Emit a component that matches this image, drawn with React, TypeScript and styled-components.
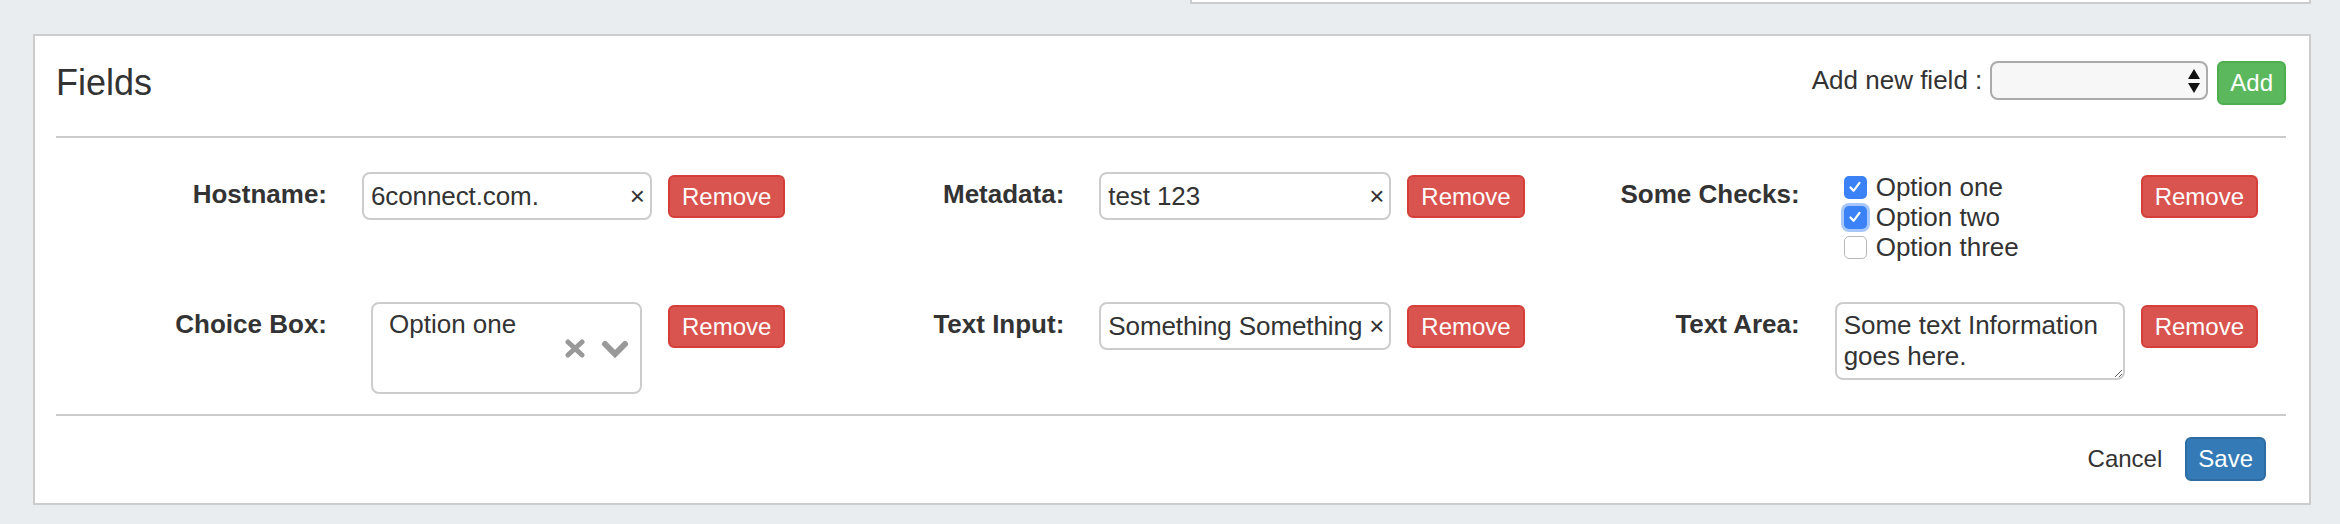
import styled, { createGlobalStyle } from "styled-components";

const GlobalStyle = createGlobalStyle`
  body {
    margin: 0;
    background-color: #e9edf0;
    font-family: "Liberation Sans", Arial, Helvetica, sans-serif;
    color: #333;
  }
`;

type FieldDef = {
  label: string;
  kind: "text" | "choice" | "checks" | "area";
  value?: string;
};

const fields: FieldDef[] = [
  { label: "Hostname:", kind: "text", value: "6connect.com." },
  { label: "Metadata:", kind: "text", value: "test 123" },
  { label: "Some Checks:", kind: "checks" },
  { label: "Choice Box:", kind: "choice", value: "Option one" },
  { label: "Text Input:", kind: "text", value: "Something Something" },
  { label: "Text Area:", kind: "area", value: "Some text Information goes here." },
];

const checks = [
  { label: "Option one", checked: true, focused: false },
  { label: "Option two", checked: true, focused: true },
  { label: "Option three", checked: false, focused: false },
];

const labelWidths = [271, 265, 257];
const controlWidths = [290, 292, 290];

function ClearIcon() {
  return (
    <svg width="22" height="19" viewBox="0 0 22 19">
      <path d="M4 3 L18 16 M18 3 L4 16" stroke="#999" strokeWidth="5" strokeLinecap="round" />
    </svg>
  );
}

function ChevronIcon() {
  return (
    <svg width="28" height="19" viewBox="0 0 28 19">
      <path d="M4 5 L14 15 L24 5" stroke="#999" strokeWidth="6" fill="none" strokeLinecap="round" />
    </svg>
  );
}

function SelectArrows() {
  return (
    <svg width="12" height="24" viewBox="0 0 12 24">
      <polygon points="6,0 12,10 0,10" fill="#111" />
      <polygon points="0,14 12,14 6,24" fill="#111" />
    </svg>
  );
}

function CheckMark() {
  return (
    <svg width="14" height="14" viewBox="0 0 14 14">
      <path d="M2.5 7.5 L5.6 10.8 L11.5 2.8" stroke="#fff" strokeWidth="2.2" fill="none" strokeLinecap="round" strokeLinejoin="round" />
    </svg>
  );
}

function renderControl(field: FieldDef) {
  if (field.kind === "text") {
    return (
      <TextBox>
        <TextValue>{field.value}</TextValue>
        <ClearMark>×</ClearMark>
      </TextBox>
    );
  }
  if (field.kind === "choice") {
    return (
      <ChoiceBox>
        <ChoiceValue>{field.value}</ChoiceValue>
        <ChoiceIcons>
          <ClearIcon />
          <ChevronIcon />
        </ChoiceIcons>
      </ChoiceBox>
    );
  }
  if (field.kind === "area") {
    return <TextArea defaultValue={field.value} readOnly />;
  }
  return (
    <Checks>
      {checks.map((item) => (
        <CheckRow key={item.label}>
          <CheckBox $checked={item.checked} $focused={item.focused}>
            {item.checked && <CheckMark />}
          </CheckBox>
          {item.label}
        </CheckRow>
      ))}
    </Checks>
  );
}

function App() {
  return (
    <>
      <GlobalStyle />
      <TopRow>
        <TopStub />
      </TopRow>
      <Panel>
        <Header>
          <Title>Fields</Title>
          <AddGroup>
            <AddLabel>Add new field :</AddLabel>
            <SelectBox>
              <SelectArrows />
            </SelectBox>
            <Button $variant="success">Add</Button>
          </AddGroup>
        </Header>
        <Divider />
        <FieldGrid>
          {fields.map((field, index) => (
            <Field key={field.label}>
              <FieldLabel $width={labelWidths[index % 3]}>{field.label}</FieldLabel>
              <Control $width={controlWidths[index % 3]}>{renderControl(field)}</Control>
              <RemoveButton $variant="danger">Remove</RemoveButton>
            </Field>
          ))}
        </FieldGrid>
        <Divider />
        <Footer>
          <CancelLink>Cancel</CancelLink>
          <Button $variant="primary">Save</Button>
        </Footer>
      </Panel>
    </>
  );
}

const TopRow = styled.div`
  display: flex;
  justify-content: flex-end;
  padding-right: 29px;
`;

const TopStub = styled.div`
  width: 1121px;
  height: 4px;
  background-color: #fff;
  border: 2px solid #ccc;
  border-top: none;
  box-sizing: border-box;
`;

const Panel = styled.div`
  margin: 30px 29px 0 33px;
  padding: 0 23px 0 21px;
  background-color: #fff;
  border: 2px solid #ccc;
`;

const Header = styled.div`
  display: flex;
  justify-content: space-between;
  align-items: flex-start;
  padding: 25px 0 31px;
`;

const Title = styled.h3`
  margin: 0;
  font-size: 36px;
  font-weight: 400;
  line-height: 44px;
  color: #333;
`;

const AddGroup = styled.div`
  display: flex;
  align-items: flex-start;
  gap: 8px;
`;

const AddLabel = styled.span`
  margin-top: 1px;
  font-size: 26px;
  line-height: 36px;
  color: #333;
`;

const SelectBox = styled.div`
  width: 218px;
  height: 39px;
  display: flex;
  align-items: center;
  justify-content: flex-end;
  padding-right: 6px;
  margin-right: 1px;
  background-color: #f7f7f7;
  border: 2px solid #aaa;
  border-radius: 8px;
  box-sizing: border-box;
`;

const Button = styled.button<{ $variant: "danger" | "success" | "primary" }>`
  height: 44px;
  padding: 0 11px;
  font-family: "Liberation Sans", Arial, Helvetica, sans-serif;
  font-size: 24px;
  color: #fff;
  border-radius: 6px;
  border: 2px solid
    ${(p) => (p.$variant === "danger" ? "#d43f3a" : p.$variant === "success" ? "#4cae4c" : "#2e6da4")};
  background-color: ${(p) =>
    p.$variant === "danger" ? "#d9534f" : p.$variant === "success" ? "#5cb85c" : "#337ab7"};
  flex-shrink: 0;
  cursor: pointer;
`;

const RemoveButton = styled(Button)`
  height: 43px;
  padding: 0 12px;
  margin-left: 16px;
  margin-top: 3px;
`;

const Divider = styled.div`
  height: 2px;
  background-color: #ccc;
`;

const FieldGrid = styled.div`
  display: grid;
  grid-template-columns: repeat(3, 1fr);
  row-gap: 40px;
  padding: 34px 0 20px;
`;

const Field = styled.div`
  display: flex;
  align-items: flex-start;
`;

const FieldLabel = styled.label<{ $width: number }>`
  width: ${(p) => p.$width}px;
  flex-shrink: 0;
  padding-top: 4px;
  text-align: right;
  font-size: 26px;
  font-weight: 700;
  line-height: 36px;
  color: #333;
`;

const Control = styled.div<{ $width: number }>`
  width: ${(p) => p.$width}px;
  margin-left: 35px;
  flex-shrink: 0;
`;

const TextBox = styled.div`
  display: flex;
  align-items: center;
  height: 48px;
  padding: 0 5px 0 7px;
  border: 2px solid #ccc;
  border-radius: 8px;
  box-sizing: border-box;
  font-size: 26px;
  line-height: 30px;
  color: #333;
`;

const TextValue = styled.span`
  flex: 1;
  min-width: 0;
  white-space: nowrap;
  letter-spacing: -0.1px;
`;

const ClearMark = styled.span`
  flex-shrink: 0;
  font-size: 26px;
  color: #333;
`;

const ChoiceBox = styled.div`
  display: flex;
  width: 271px;
  height: 92px;
  margin-left: 9px;
  padding: 2px 11px 0 16px;
  border: 2px solid #ccc;
  border-radius: 8px;
  box-sizing: border-box;
`;

const ChoiceValue = styled.span`
  flex: 1;
  font-size: 26px;
  line-height: 36px;
  color: #333;
`;

const ChoiceIcons = styled.div`
  display: flex;
  align-items: center;
  align-self: center;
  gap: 15px;
  margin-top: -2px;
`;

const TextArea = styled.textarea`
  display: block;
  width: 290px;
  height: 78px;
  margin: 0;
  padding: 6px 7px;
  border: 2px solid #ccc;
  border-radius: 8px;
  box-sizing: border-box;
  font-family: "Liberation Sans", Arial, Helvetica, sans-serif;
  font-size: 26px;
  line-height: 31px;
  color: #333;
  overflow: hidden;
  outline: none;
`;

const Checks = styled.div`
  display: flex;
  flex-direction: column;
  padding-left: 9px;
`;

const CheckRow = styled.label`
  display: flex;
  align-items: center;
  gap: 9px;
  height: 30px;
  font-size: 26px;
  color: #333;
`;

const CheckBox = styled.span<{ $checked: boolean; $focused: boolean }>`
  width: 23px;
  height: 23px;
  display: flex;
  align-items: center;
  justify-content: center;
  flex-shrink: 0;
  border-radius: 5px;
  box-sizing: border-box;
  background-color: ${(p) => (p.$checked ? "#3b82f6" : "#fff")};
  border: ${(p) => (p.$checked ? "none" : "1.5px solid #b8b8b8")};
  box-shadow: ${(p) => (p.$focused ? "0 0 0 3px rgba(59, 130, 246, 0.45)" : "none")};
`;

const Footer = styled.div`
  display: flex;
  justify-content: flex-end;
  align-items: center;
  gap: 23px;
  padding: 21px 20px 22px 0;
`;

const CancelLink = styled.span`
  font-size: 24px;
  color: #333;
  cursor: pointer;
`;

export default App;
